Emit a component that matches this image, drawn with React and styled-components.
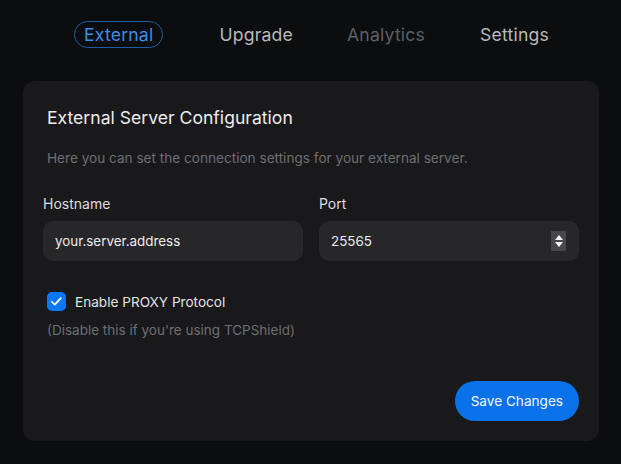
import { useState } from "react";
import styled, { createGlobalStyle } from "styled-components";

const Global = createGlobalStyle`
  html, body {
    margin: 0;
    background: #0c0d0f;
    font-family: Inter, "Noto Sans", sans-serif;
    color: #ececee;
  }
  * { box-sizing: border-box; }
`;

const Page = styled.div`
  padding: 21px 22px 0 23px;
`;

const Tabs = styled.nav`
  display: flex;
  align-items: center;
  padding-left: 51px;
  height: 27px;
`;

const Tab = styled.button`
  font-family: inherit;
  font-size: 17.6px;
  font-weight: 400;
  letter-spacing: 0.2px;
  background: transparent;
  border: 1px solid ${(p) => (p.$active ? "#1c5ea6" : "transparent")};
  border-radius: 14px;
  height: 27px;
  padding: 0 ${(p) => (p.$active ? 9 : 8)}px;
  margin-left: ${(p) => p.$gap || 0}px;
  color: ${(p) => (p.$active ? "#3c8ee4" : p.$muted ? "#5d6066" : "#b7b9bd")};
  cursor: pointer;
`;

const Card = styled.section`
  margin-top: 33px;
  width: 576px;
  height: 360px;
  background: #19191b;
  border-radius: 12px;
  padding: 26px 20px 0 20px;
  display: flex;
  flex-direction: column;
`;

const Title = styled.h2`
  margin: 0 0 0 4px;
  font-size: 17.6px;
  font-weight: 400;
  color: #ececee;
  line-height: 22px;
`;

const Desc = styled.p`
  margin: 21px 0 0 4px;
  font-size: 13.6px;
  color: #6c6e73;
  line-height: 16px;
`;

const Fields = styled.div`
  display: grid;
  grid-template-columns: 260px 260px;
  column-gap: 16px;
  margin-top: 29px;
`;

const Field = styled.label`
  display: flex;
  flex-direction: column;
  gap: 9px;
`;

const Label = styled.span`
  font-size: 14px;
  color: #dcdde0;
  line-height: 17px;
`;

const InputWrap = styled.div`
  position: relative;
`;

const Input = styled.input`
  width: 100%;
  height: 40px;
  border: none;
  border-radius: 10px;
  background: #27272a;
  color: #ececee;
  font-family: inherit;
  font-size: 13.4px;
  padding: 0 12px;
  color-scheme: dark;
  outline: none;
  appearance: textfield;
  &::-webkit-inner-spin-button,
  &::-webkit-outer-spin-button {
    -webkit-appearance: none;
    margin: 0;
  }
`;

const Spinner = styled.div`
  position: absolute;
  right: 13px;
  top: 10px;
  width: 15px;
  height: 20px;
  background: #47474b;
  display: flex;
  flex-direction: column;
  align-items: center;
  justify-content: center;
  gap: 2px;
`;

const Arrow = styled.span`
  width: 0;
  height: 0;
  border-left: 4px solid transparent;
  border-right: 4px solid transparent;
  ${(p) => (p.$up ? "border-bottom: 5px solid #f4f4f5;" : "border-top: 5px solid #f4f4f5;")}
`;

const CheckRow = styled.label`
  display: flex;
  align-items: center;
  gap: 9px;
  margin: 31px 0 0 4px;
  cursor: pointer;
`;

const Box = styled.span`
  width: 19px;
  height: 19px;
  border-radius: 5px;
  background: ${(p) => (p.$on ? "#0a78f5" : "#27272a")};
  display: flex;
  align-items: center;
  justify-content: center;
`;

const CheckText = styled.span`
  font-size: 13.6px;
  color: #e2e3e6;
`;

const Hint = styled.p`
  margin: 11px 0 0 4px;
  font-size: 13.5px;
  color: #6c6e73;
  line-height: 16px;
`;

const Footer = styled.div`
  display: flex;
  justify-content: flex-end;
  margin-top: 43px;
`;

const SaveButton = styled.button`
  height: 40px;
  padding: 0 16px;
  border: none;
  border-radius: 20px;
  background: #0a72e8;
  color: #f2f6fc;
  font-family: inherit;
  font-size: 13.6px;
  cursor: pointer;
`;

export default function App() {
  let [proxy, setProxy] = useState(true);
  let [host, setHost] = useState("your.server.address");
  let [port, setPort] = useState(25565);

  return (
    <>
      <Global />
      <Page>
        <Tabs>
          <Tab $active>External</Tab>
          <Tab $gap={47}>Upgrade</Tab>
          <Tab $muted $gap={36}>Analytics</Tab>
          <Tab $gap={37}>Settings</Tab>
        </Tabs>
        <Card>
          <Title>External Server Configuration</Title>
          <Desc>Here you can set the connection settings for your external server.</Desc>
          <Fields>
            <Field>
              <Label>Hostname</Label>
              <InputWrap>
                <Input value={host} onChange={(e) => setHost(e.target.value)} />
              </InputWrap>
            </Field>
            <Field>
              <Label>Port</Label>
              <InputWrap>
                <Input type="number" value={port} onChange={(e) => setPort(e.target.value)} />
                <Spinner>
                  <Arrow $up />
                  <Arrow />
                </Spinner>
              </InputWrap>
            </Field>
          </Fields>
          <CheckRow onClick={() => setProxy(!proxy)}>
            <Box $on={proxy}>
              {proxy && (
                <svg width="19" height="19" viewBox="0 0 19 19" fill="none">
                  <path d="M4.8 9.8l3 2.8 6-6.4" stroke="#fff" strokeWidth="1.7" strokeLinecap="round" strokeLinejoin="round" />
                </svg>
              )}
            </Box>
            <CheckText>Enable PROXY Protocol</CheckText>
          </CheckRow>
          <Hint>(Disable this if you're using TCPShield)</Hint>
          <Footer>
            <SaveButton>Save Changes</SaveButton>
          </Footer>
        </Card>
      </Page>
    </>
  );
}
